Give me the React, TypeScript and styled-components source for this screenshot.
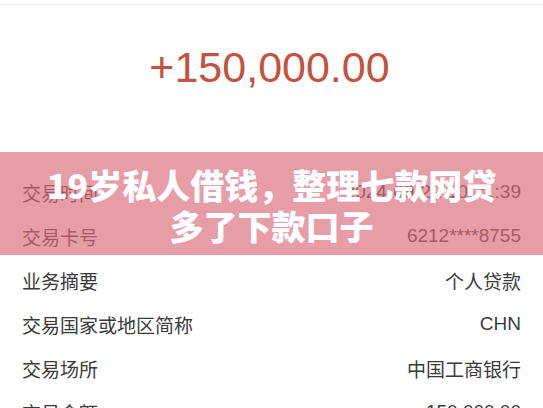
import React from "react";
import styled, { createGlobalStyle } from "styled-components";

const Global = createGlobalStyle`
  html, body { margin: 0; padding: 0; background: #ffffff; }
  body { width: 543px; height: 408px; overflow: hidden; font-family: "Liberation Sans", "Noto Sans CJK SC", sans-serif; }
`;

const Page = styled.div`
  position: relative;
  width: 543px;
  height: 408px;
  overflow: hidden;
  background: #fff;
  padding-top: 4px;
  box-sizing: border-box;
`;

const Sheet = styled.div`
  border-top: 1px solid #ededed;
  display: flex;
  flex-direction: column;
`;

const Header = styled.div`
  height: 165px;
  display: flex;
  justify-content: center;
  padding-top: 37px;
  box-sizing: border-box;
`;

const Amount = styled.div`
  font-family: "Liberation Sans", "Helvetica", sans-serif;
  font-size: 43px;
  line-height: 50px;
  color: #c5513f;
  margin-left: -4px;
`;

const List = styled.div`
  display: flex;
  flex-direction: column;
  padding: 0 22px;
`;

const Row = styled.div`
  height: 44px;
  display: flex;
  align-items: center;
  justify-content: space-between;
  font-size: 19px;
  color: #333;
`;

const Label = styled.span`
  font-family: "Noto Sans CJK SC", "Liberation Sans", sans-serif;
  font-weight: 400;
  color: #3a3a3a;
`;

const Value = styled.span<{ $latin?: boolean }>`
  font-family: ${(p) =>
    p.$latin
      ? `"Liberation Sans", "Noto Sans CJK SC", sans-serif`
      : `"Noto Sans CJK SC", "Liberation Sans", sans-serif`};
  color: #3a3a3a;
`;

const Banner = styled.div`
  position: absolute;
  left: 0;
  right: 0;
  top: 152px;
  height: 103px;
  background: rgba(218, 106, 122, 0.66);
  display: flex;
  flex-direction: column;
  align-items: center;
  justify-content: center;
  padding-top: 2px;
  box-sizing: border-box;
`;

const Title = styled.div`
  font-family: "Noto Sans CJK SC", "Liberation Sans", sans-serif;
  font-weight: 900;
  font-size: 34px;
  line-height: 41px;
  color: #ffffff;
  text-align: center;
  white-space: nowrap;
`;

const rows: { label: string; value: string; latin?: boolean }[] = [
  { label: "交易时间", value: "2024-09-22 10:21:39", latin: true },
  { label: "交易卡号", value: "6212****8755", latin: true },
  { label: "业务摘要", value: "个人贷款" },
  { label: "交易国家或地区简称", value: "CHN", latin: true },
  { label: "交易场所", value: "中国工商银行" },
  { label: "交易金额", value: "150,000.00", latin: true },
];

export default function App() {
  return (
    <>
      <Global />
      <Page>
        <Sheet>
          <Header>
            <Amount>+150,000.00</Amount>
          </Header>
          <List>
            {rows.map((r) => (
              <Row key={r.label}>
                <Label>{r.label}</Label>
                <Value $latin={r.latin}>{r.value}</Value>
              </Row>
            ))}
          </List>
        </Sheet>
        <Banner>
          <Title>19岁私人借钱，整理七款网贷</Title>
          <Title>多了下款口子</Title>
        </Banner>
      </Page>
    </>
  );
}
